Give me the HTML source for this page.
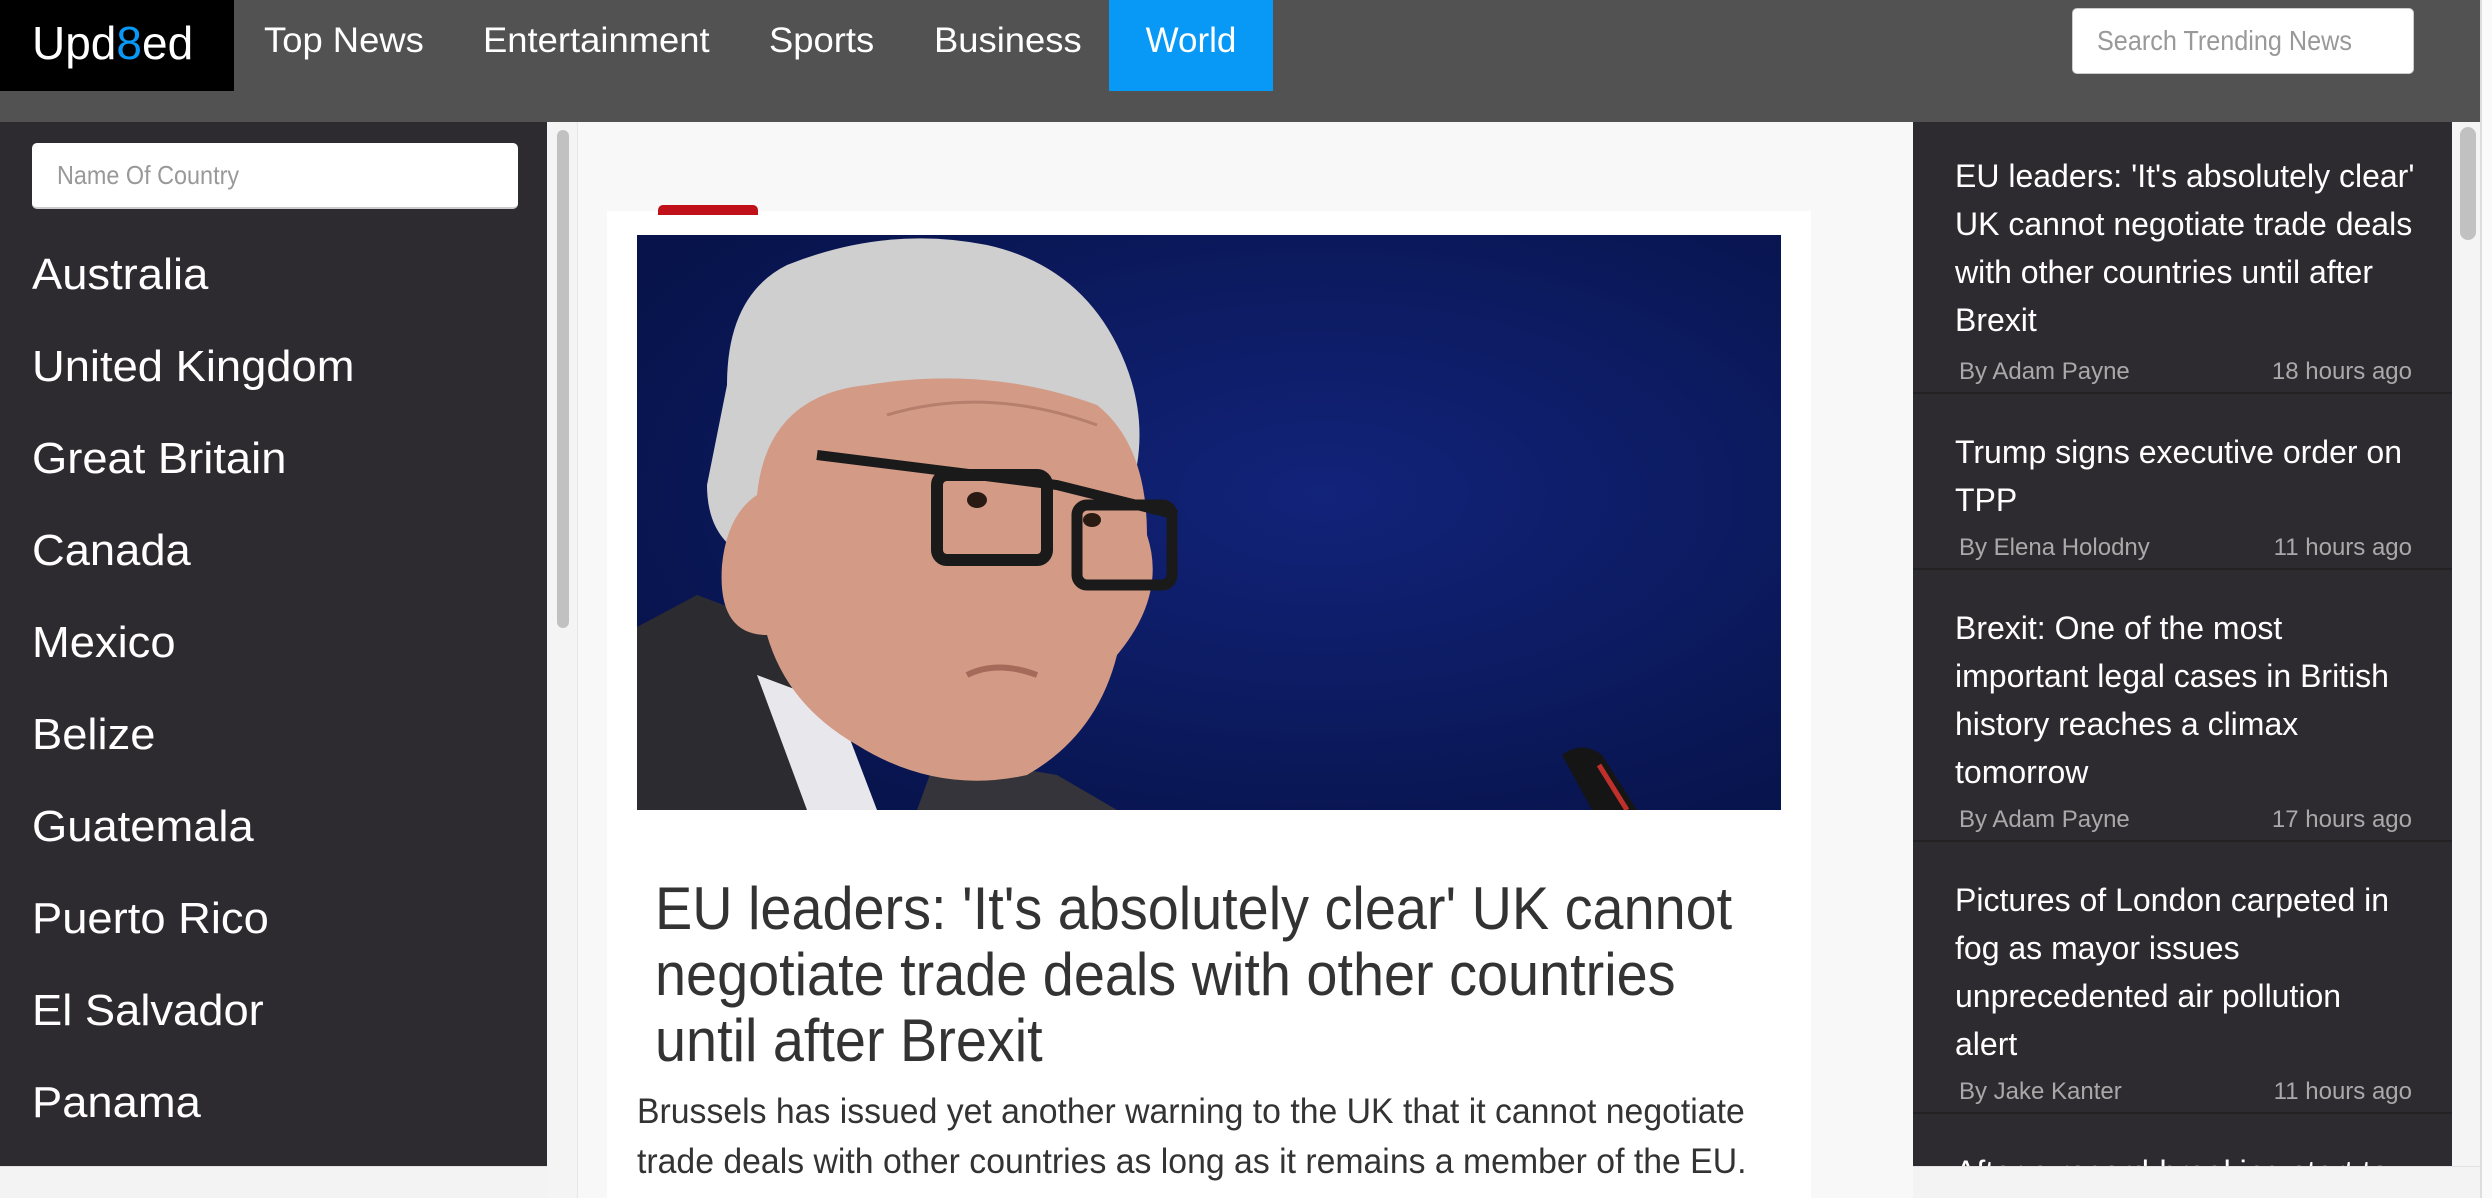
<!DOCTYPE html>
<html><head><meta charset="utf-8">
<style>
*{margin:0;padding:0;box-sizing:border-box}
html,body{width:2492px;height:1198px;overflow:hidden;background:#f0f0f0;font-family:"Liberation Sans",sans-serif}
.abs{position:absolute}
.n{display:inline-block;white-space:nowrap;transform-origin:0 50%}
#hdr{left:0;top:0;width:2480px;height:122px;background:#525252}
#logo{left:0;top:0;width:234px;height:91px;background:#000;color:#fff;font-size:46px;line-height:86px;padding-left:32px}
.nav{top:0;height:91px;line-height:82px;color:#fff;font-size:35px}
#world{left:1109px;width:164px;background:#0899f7;text-align:center}
#search{left:2072px;top:8px;width:342px;height:66px;background:#fff;border:1px solid #ccc;border-radius:5px;color:#999;font-size:28px;line-height:64px;padding-left:24px}
#left{left:0;top:122px;width:547px;height:1044px;background:#2d2b30}
#lin{left:32px;top:143px;width:486px;height:66px;background:#fff;border-radius:5px;border-bottom:2px solid #ccc;color:#999;font-size:26px;line-height:64px;padding-left:25px}
.c{left:32px;color:#fff;font-size:44px;line-height:60px}
#lscroll{left:547px;top:122px;width:31px;height:1076px;background:#f4f4f4;border-right:1px solid #e6e6e6}
#lthumb{left:557px;top:130px;width:12px;height:498px;background:#c1c1c1;border-radius:6px}
#main{left:578px;top:122px;width:1335px;height:1076px;background:#f8f8f8}
#card{left:607px;top:211px;width:1204px;height:987px;background:#fff}
#red{left:658px;top:205px;width:100px;height:10px;background:#c0101a;border-radius:5px 5px 0 0}
#img{left:637px;top:235px;width:1144px;height:575px}
.t{left:655px;color:#333;font-size:60px;line-height:66px}
.b{left:637px;color:#333;font-size:35px;line-height:50px}
#right{left:1913px;top:122px;width:539px;height:1044px;background:#2d2b30;overflow:hidden}
.h{position:absolute;left:42px;color:#fff;font-size:32px;line-height:48px}
.m{position:absolute;left:46px;right:40px;color:#a9a9a9;font-size:24px}
.m span{float:right}
.sep{position:absolute;left:0;width:539px;height:2px;background:#222}
#rthumb{left:2460px;top:127px;width:16px;height:113px;background:#c1c1c1;border-radius:8px}
#rstrip{left:2452px;top:122px;width:28px;height:1076px;background:#f4f4f4}
#edge{left:2480px;top:0;width:12px;height:1198px;background:#fafafa;border-left:2px solid #ddd}
#bot{left:0;top:1166px;width:2492px;height:32px;background:#f3f3f3;border-top:1px solid #e2e2e2}
</style></head><body>
<div class="abs" id="bot"></div>
<div class="abs" id="hdr"></div>
<div class="abs" id="logo">Upd<span style="color:#0899f7">8</span>ed</div>
<div class="abs nav" style="left:264px"><span class="n" style="transform:scaleX(1.04)">Top News</span></div>
<div class="abs nav" style="left:483px"><span class="n" style="transform:scaleX(1.04)">Entertainment</span></div>
<div class="abs nav" style="left:769px"><span class="n" style="transform:scaleX(1.04)">Sports</span></div>
<div class="abs nav" style="left:934px"><span class="n" style="transform:scaleX(1.04)">Business</span></div>
<div class="abs nav" id="world">World</div>
<div class="abs" id="search"><span class="n" style="transform:scaleX(.9)">Search Trending News</span></div>

<div class="abs" id="left"></div>
<div class="abs" id="lin"><span class="n" style="transform:scaleX(.9)">Name Of Country</span></div>
<div class="abs c" style="top:245px"><span class="n" style="transform:scaleX(1.03)">Australia</span></div>
<div class="abs c" style="top:337px"><span class="n" style="transform:scaleX(1.03)">United Kingdom</span></div>
<div class="abs c" style="top:429px"><span class="n" style="transform:scaleX(1.03)">Great Britain</span></div>
<div class="abs c" style="top:521px"><span class="n" style="transform:scaleX(1.03)">Canada</span></div>
<div class="abs c" style="top:613px"><span class="n" style="transform:scaleX(1.03)">Mexico</span></div>
<div class="abs c" style="top:705px"><span class="n" style="transform:scaleX(1.03)">Belize</span></div>
<div class="abs c" style="top:797px"><span class="n" style="transform:scaleX(1.03)">Guatemala</span></div>
<div class="abs c" style="top:889px"><span class="n" style="transform:scaleX(1.03)">Puerto Rico</span></div>
<div class="abs c" style="top:981px"><span class="n" style="transform:scaleX(1.03)">El Salvador</span></div>
<div class="abs c" style="top:1073px"><span class="n" style="transform:scaleX(1.03)">Panama</span></div>
<div class="abs" id="lscroll"></div>
<div class="abs" id="lthumb"></div>

<div class="abs" id="main"></div>
<div class="abs" id="card"></div>
<div class="abs" id="red"></div>
<svg class="abs" id="img" viewBox="0 0 1144 575" preserveAspectRatio="none">
<defs><radialGradient id="bg" cx="0.6" cy="0.45" r="0.7"><stop offset="0" stop-color="#12237a"/><stop offset="1" stop-color="#07134a"/></radialGradient></defs>
<rect width="1144" height="575" fill="url(#bg)"/>
<path d="M0 392 L60 360 L140 390 L200 575 L0 575Z" fill="#2c2c30"/>
<path d="M300 520 L420 540 L480 575 L280 575Z" fill="#34343a"/>
<path d="M120 440 L170 575 L240 575 L200 470Z" fill="#e8e8ec"/>
<path d="M90 150 Q90 60 150 30 Q250 -10 350 10 Q440 30 480 110 Q510 170 500 230 L470 280 L140 330 Q70 320 70 250Z" fill="#cfcfcf"/>
<path d="M120 260 Q130 160 230 150 Q350 130 460 170 Q510 210 510 300 Q530 360 480 420 Q460 500 390 540 Q300 560 220 510 Q150 470 130 400 Q80 400 85 330 Q90 280 120 260Z" fill="#d39a86"/>
<path d="M250 180 Q350 150 460 190" stroke="#b57f6c" stroke-width="3" fill="none"/>
<path d="M180 220 L420 250 L540 280" stroke="#1a1a1a" stroke-width="10" fill="none"/>
<rect x="300" y="240" width="110" height="85" rx="10" fill="none" stroke="#1a1a1a" stroke-width="12"/>
<rect x="440" y="270" width="95" height="80" rx="10" fill="none" stroke="#1a1a1a" stroke-width="11"/>
<ellipse cx="340" cy="265" rx="10" ry="8" fill="#2a1a14"/>
<ellipse cx="455" cy="285" rx="9" ry="7" fill="#2a1a14"/>
<path d="M330 440 Q360 425 400 440" stroke="#a66a5a" stroke-width="6" fill="none"/>
<path d="M925 520 Q945 505 965 520 L1000 575 L955 575Z" fill="#151515"/>
<path d="M962 530 L990 575" stroke="#c0302a" stroke-width="5"/>
</svg>
<div class="abs t" style="top:876px"><span class="n" style="transform:scaleX(.93)">EU leaders: 'It's absolutely clear' UK cannot</span></div>
<div class="abs t" style="top:942px"><span class="n" style="transform:scaleX(.93)">negotiate trade deals with other countries</span></div>
<div class="abs t" style="top:1008px"><span class="n" style="transform:scaleX(.93)">until after Brexit</span></div>
<div class="abs b" style="top:1087px"><span class="n" style="transform:scaleX(.965)">Brussels has issued yet another warning to the UK that it cannot negotiate</span></div>
<div class="abs b" style="top:1137px"><span class="n" style="transform:scaleX(.965)">trade deals with other countries as long as it remains a member of the EU.</span></div>

<div class="abs" id="right">
<div class="h" style="top:30px"><span class="n">EU leaders: 'It's absolutely clear'</span><br><span class="n">UK cannot negotiate trade deals</span><br><span class="n">with other countries until after</span><br>Brexit</div>
<div class="m" style="top:236px">By Adam Payne<span>18 hours ago</span></div>
<div class="sep" style="top:270px"></div>
<div class="h" style="top:306px"><span class="n">Trump signs executive order on</span><br>TPP</div>
<div class="m" style="top:412px">By Elena Holodny<span>11 hours ago</span></div>
<div class="sep" style="top:446px"></div>
<div class="h" style="top:482px"><span class="n">Brexit: One of the most</span><br><span class="n">important legal cases in British</span><br><span class="n">history reaches a climax</span><br>tomorrow</div>
<div class="m" style="top:684px">By Adam Payne<span>17 hours ago</span></div>
<div class="sep" style="top:718px"></div>
<div class="h" style="top:754px"><span class="n">Pictures of London carpeted in</span><br><span class="n">fog as mayor issues</span><br><span class="n">unprecedented air pollution</span><br>alert</div>
<div class="m" style="top:956px">By Jake Kanter<span>11 hours ago</span></div>
<div class="sep" style="top:990px"></div>
<div class="h" style="top:1026px"><span class="n">After a record-breaking start to</span></div>
</div>
<div class="abs" id="rstrip"></div>
<div class="abs" id="rthumb"></div>
<div class="abs" style="left:0;top:1166px;width:547px;height:32px;background:#f3f3f3;border-top:1px solid #e2e2e2"></div>
<div class="abs" style="left:1913px;top:1166px;width:567px;height:32px;background:#f3f3f3;border-top:1px solid #e2e2e2"></div>
<div class="abs" id="edge"></div>
</body></html>
